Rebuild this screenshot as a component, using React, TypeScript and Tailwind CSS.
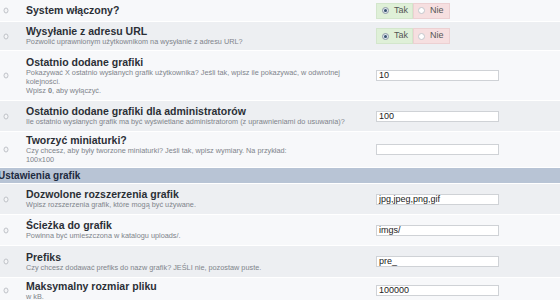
import type { ReactNode } from "react";

type Row = {
  title: string;
  desc?: ReactNode;
  h: string;
  dark: boolean;
  control: ReactNode;
};

function Bullet() {
  return (
    <svg width="6" height="7" viewBox="0 0 6 7" className="shrink-0">
      <ellipse cx="3" cy="3.5" rx="2" ry="2.5" fill="#f4f5f7" stroke="#b9bcc2" strokeWidth="0.9" />
    </svg>
  );
}

function YesNo() {
  return (
    <div className="flex h-[16px] text-[9px] text-[#555]">
      <label className="flex items-center gap-[5px] bg-[#dff0d8] border border-[#d3e6cc] pl-[5px] pr-[4px]">
        <span className="w-[7px] h-[7px] rounded-full border border-[#8f9aa6] bg-[#dfe6ee] flex items-center justify-center">
          <span className="w-[3px] h-[3px] rounded-full bg-[#35506e]" />
        </span>
        Tak
      </label>
      <label className="flex items-center gap-[5px] bg-[#f6dfe0] border border-[#ecd0d2] pl-[4px] pr-[5px]">
        <span className="w-[7px] h-[7px] rounded-full border border-[#c3c7cc] bg-white" />
        Nie
      </label>
    </div>
  );
}

function Field({ value }: { value: string }) {
  return (
    <div className="w-[123px] h-[11px] bg-white border border-[#cfd2d6] text-[9px] leading-[9px] text-[#222] pl-[2px]">
      {value}
    </div>
  );
}

const general: Row[] = [
  { title: "System włączony?", h: "h-[22px]", dark: false, control: <YesNo /> },
  {
    title: "Wysyłanie z adresu URL",
    desc: "Pozwolić uprawnionym użytkownikom na wysyłanie z adresu URL?",
    h: "h-[29px]",
    dark: true,
    control: <YesNo />,
  },
  {
    title: "Ostatnio dodane grafiki",
    desc: (
      <>
        Pokazywać X ostatnio wysłanych grafik użytkownika? Jeśli tak, wpisz ile pokazywać, w odwrotnej
        <br />
        kolejności.
        <br />
        Wpisz <b>0</b>, aby wyłączyć.
      </>
    ),
    h: "h-[50px]",
    dark: false,
    control: <Field value="10" />,
  },
  {
    title: "Ostatnio dodane grafiki dla administratorów",
    desc: "Ile ostatnio wysłanych grafik ma być wyświetlane administratorom (z uprawnieniami do usuwania)?",
    h: "h-[31px]",
    dark: true,
    control: <Field value="100" />,
  },
  {
    title: "Tworzyć miniaturki?",
    desc: (
      <>
        Czy chcesz, aby były tworzone miniaturki? Jeśli tak, wpisz wymiary. Na przykład:
        <br />
        100x100
      </>
    ),
    h: "h-[36px]",
    dark: false,
    control: <Field value="" />,
  },
];

const images: Row[] = [
  {
    title: "Dozwolone rozszerzenia grafik",
    desc: "Wpisz rozszerzenia grafik, które mogą być używane.",
    h: "h-[31px]",
    dark: true,
    control: <Field value="jpg,jpeg,png,gif" />,
  },
  {
    title: "Ścieżka do grafik",
    desc: "Powinna być umieszczona w katalogu uploads/.",
    h: "h-[31px]",
    dark: false,
    control: <Field value="imgs/" />,
  },
  {
    title: "Prefiks",
    desc: "Czy chcesz dodawać prefiks do nazw grafik? JEŚLI nie, pozostaw puste.",
    h: "h-[32px]",
    dark: true,
    control: <Field value="pre_" />,
  },
  {
    title: "Maksymalny rozmiar pliku",
    desc: "w kB.",
    h: "h-[26px]",
    dark: false,
    control: <Field value="100000" />,
  },
];

function SettingRow({ row }: { row: Row }) {
  return (
    <div
      className={`flex items-center ${row.h} border-b border-white ${
        row.dark ? "bg-[#edeff2]" : "bg-[#f7f8fa]"
      }`}
    >
      <div className="w-[26px] pl-[3px] flex items-center">
        <Bullet />
      </div>
      <div className="w-[350px]">
        <div className="text-[10.5px] leading-[11px] font-bold text-[#2b2f36] whitespace-nowrap">
          {row.title}
        </div>
        {row.desc && (
          <div className="text-[7.3px] leading-[9px] text-[#80848b] whitespace-nowrap">{row.desc}</div>
        )}
      </div>
      <div>{row.control}</div>
    </div>
  );
}

export default function App() {
  return (
    <div
      className="w-[560px] h-[300px] overflow-hidden bg-[#f7f8fa]"
      style={{ fontFamily: '"Liberation Sans", Arial, sans-serif' }}
    >
      {general.map((row) => (
        <SettingRow key={row.title} row={row} />
      ))}
      <div className="h-[16px] bg-[#b8c4d5] flex items-center border-b border-white -ml-[2px] text-[10px] font-bold text-[#1d2a40]">
        Ustawienia grafik
      </div>
      {images.map((row) => (
        <SettingRow key={row.title} row={row} />
      ))}
    </div>
  );
}
